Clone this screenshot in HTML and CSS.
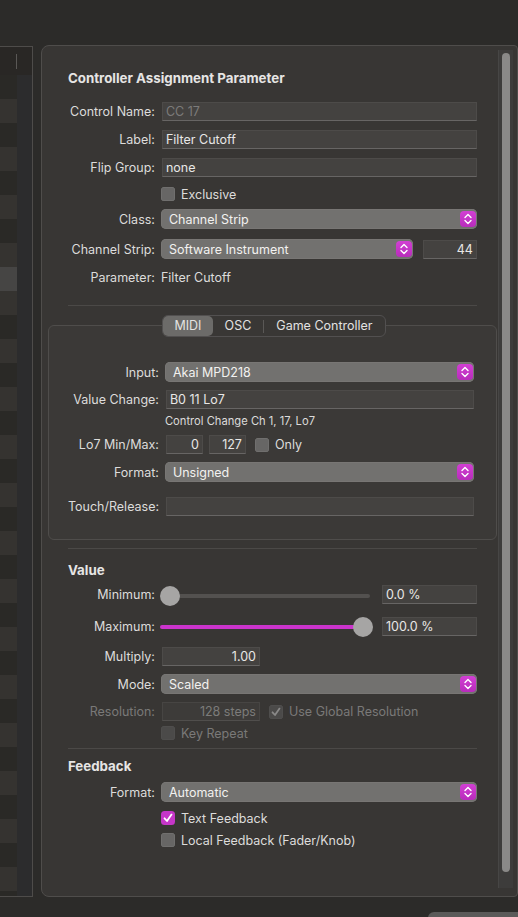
FILE: index.html
```html
<!DOCTYPE html>
<html>
<head>
<meta charset="utf-8">
<link rel="stylesheet" href="styles.css">
</head>
<body>
<div class="top"></div>
<div class="main">
  <div class="list">
    <div class="list-head"><div class="head-col"></div><div class="head-div"></div></div>
    <div class="list-body">
      <div class="rows" id="rows"></div>
      <div class="list-track"></div>
    </div>
  </div>
  <div class="panel">
    <div class="content">
      <div class="title">Controller Assignment Parameter</div>

      <div class="row r-f r-cn">
        <div class="lbl">Control Name:</div>
        <div class="field disabled grow">CC 17</div>
      </div>
      <div class="row r-f r-lab">
        <div class="lbl">Label:</div>
        <div class="field grow">Filter Cutoff</div>
      </div>
      <div class="row r-f r-flip">
        <div class="lbl">Flip Group:</div>
        <div class="field grow">none</div>
      </div>
      <div class="row r-chk r-excl">
        <div class="lbl"></div>
        <div class="chk"></div><span class="chk-text">Exclusive</span>
      </div>
      <div class="row r-pop r-class">
        <div class="lbl">Class:</div>
        <div class="popup grow"><span>Channel Strip</span><div class="step"><svg viewBox="0 0 16 16" width="16" height="16"><path d="M5 6.5 L8 3.5 L11 6.5 M5 9.5 L8 12.5 L11 9.5" fill="none" stroke="#fff" stroke-width="1.4" stroke-linecap="round" stroke-linejoin="round"/></svg></div></div>
      </div>
      <div class="row r-pop r-cs">
        <div class="lbl">Channel Strip:</div>
        <div class="popup cs-pop"><span>Software Instrument</span><div class="step"><svg viewBox="0 0 16 16" width="16" height="16"><path d="M5 6.5 L8 3.5 L11 6.5 M5 9.5 L8 12.5 L11 9.5" fill="none" stroke="#fff" stroke-width="1.4" stroke-linecap="round" stroke-linejoin="round"/></svg></div></div>
        <div class="field num cs-num">44</div>
      </div>
      <div class="row r-txt r-param">
        <div class="lbl">Parameter:</div>
        <span class="plain">Filter Cutoff</span>
      </div>
      <div class="sep sep1"></div>

      <div class="tabbox">
        <div class="seg">
          <div class="seg-item sel">MIDI</div>
          <div class="seg-item">OSC</div>
          <div class="seg-div"></div>
          <div class="seg-item">Game Controller</div>
        </div>
        <div class="row r-pop r-in">
          <div class="lbl lbl2">Input:</div>
          <div class="popup grow"><span>Akai MPD218</span><div class="step"><svg viewBox="0 0 16 16" width="16" height="16"><path d="M5 6.5 L8 3.5 L11 6.5 M5 9.5 L8 12.5 L11 9.5" fill="none" stroke="#fff" stroke-width="1.4" stroke-linecap="round" stroke-linejoin="round"/></svg></div></div>
        </div>
        <div class="row r-f r-vc">
          <div class="lbl lbl2">Value Change:</div>
          <div class="field grow">B0 11 Lo7</div>
        </div>
        <div class="small">Control Change Ch 1, 17, Lo7</div>
        <div class="row r-f r-lo">
          <div class="lbl lbl2">Lo7 Min/Max:</div>
          <div class="field num f-small">0</div>
          <div class="field num f-small f-gap">127</div>
          <div class="chk chk-only"></div><span class="chk-text">Only</span>
        </div>
        <div class="row r-pop r-fmt">
          <div class="lbl lbl2">Format:</div>
          <div class="popup grow"><span>Unsigned</span><div class="step"><svg viewBox="0 0 16 16" width="16" height="16"><path d="M5 6.5 L8 3.5 L11 6.5 M5 9.5 L8 12.5 L11 9.5" fill="none" stroke="#fff" stroke-width="1.4" stroke-linecap="round" stroke-linejoin="round"/></svg></div></div>
        </div>
        <div class="row r-f r-tr">
          <div class="lbl lbl2">Touch/Release:</div>
          <div class="field grow"></div>
        </div>
      </div>
      <div class="sep sep2"></div>

      <div class="title sub t-value">Value</div>
      <div class="row r-f r-min">
        <div class="lbl">Minimum:</div>
        <div class="slider">
          <div class="track"></div>
          <div class="knob knob-min"></div>
        </div>
        <div class="field pct">0.0 %</div>
      </div>
      <div class="row r-f r-max">
        <div class="lbl">Maximum:</div>
        <div class="slider">
          <div class="track"></div>
          <div class="fill"></div>
          <div class="knob knob-max"></div>
        </div>
        <div class="field pct">100.0 %</div>
      </div>
      <div class="row r-f r-mul">
        <div class="lbl">Multiply:</div>
        <div class="field num f-mid">1.00</div>
      </div>
      <div class="row r-pop r-mode">
        <div class="lbl">Mode:</div>
        <div class="popup grow"><span>Scaled</span><div class="step"><svg viewBox="0 0 16 16" width="16" height="16"><path d="M5 6.5 L8 3.5 L11 6.5 M5 9.5 L8 12.5 L11 9.5" fill="none" stroke="#fff" stroke-width="1.4" stroke-linecap="round" stroke-linejoin="round"/></svg></div></div>
      </div>
      <div class="row r-f r-res">
        <div class="lbl dim">Resolution:</div>
        <div class="field num f-mid disabled dfield">128 steps</div>
        <div class="chk dchk res-chk"><svg viewBox="0 0 14 14" width="14" height="14"><path d="M3.5 7.3 L6 10 L10.5 3.6" fill="none" stroke="#8a8988" stroke-width="1.8" stroke-linecap="round" stroke-linejoin="round"/></svg></div><span class="chk-text dim">Use Global Resolution</span>
      </div>
      <div class="row r-chk r-key">
        <div class="lbl"></div>
        <div class="chk dchk"></div><span class="chk-text dim">Key Repeat</span>
      </div>
      <div class="sep sep3"></div>

      <div class="title sub t-fb">Feedback</div>
      <div class="row r-pop r-ffmt">
        <div class="lbl">Format:</div>
        <div class="popup grow"><span>Automatic</span><div class="step"><svg viewBox="0 0 16 16" width="16" height="16"><path d="M5 6.5 L8 3.5 L11 6.5 M5 9.5 L8 12.5 L11 9.5" fill="none" stroke="#fff" stroke-width="1.4" stroke-linecap="round" stroke-linejoin="round"/></svg></div></div>
      </div>
      <div class="row r-chk r-tf">
        <div class="lbl"></div>
        <div class="chk on"><svg viewBox="0 0 14 14" width="14" height="14"><path d="M3.5 7.3 L6 10 L10.5 3.6" fill="none" stroke="#fff" stroke-width="1.8" stroke-linecap="round" stroke-linejoin="round"/></svg></div><span class="chk-text">Text Feedback</span>
      </div>
      <div class="row r-chk r-lf">
        <div class="lbl"></div>
        <div class="chk"></div><span class="chk-text">Local Feedback (Fader/Knob)</span>
      </div>
    </div>
    <div class="scroll"><div class="thumb"></div></div>
  </div>
</div>
<div class="bottom"><div class="btn-edge"></div></div>
<script>
  var r = document.getElementById('rows');
  for (var i = 0; i < 35; i++) {
    var d = document.createElement('div');
    d.className = 'lrow' + (i % 2 ? ' odd' : '') + (i === 8 ? ' selrow' : '');
    r.appendChild(d);
  }
</script>
</body>
</html>
```
FILE: styles.css
```css
html, body {
  margin: 0;
  padding: 0;
}
body {
  width: 518px;
  height: 917px;
  overflow: hidden;
  background: #2c2b29;
  font-family: Inter, "Noto Sans", "Liberation Sans", sans-serif;
  font-size: 12.5px;
  color: #dddcdb;
}
.top {
  height: 45px;
}
.main {
  display: flex;
  height: 852px;
}
.list {
  width: 32px;
  margin-top: 1px;
  height: 849px;
  border-top: 1px solid #4e4c4a;
  border-right: 1px solid #4e4c4a;
  border-bottom: 1px solid #4e4c4a;
  display: flex;
  flex-direction: column;
  overflow: hidden;
}
.list-head {
  height: 28px;
  background: #292725;
  display: flex;
  align-items: center;
  flex: none;
}
.head-col {
  width: 16px;
}
.head-div {
  width: 1px;
  height: 15px;
  background: #5a5856;
}
.list-body {
  flex: 1;
  display: flex;
  overflow: hidden;
}
.rows {
  width: 17px;
}
.lrow {
  height: 24px;
  background: #2a2926;
}
.lrow.odd {
  background: #353330;
}
.lrow.selrow {
  background: #464544;
}
.list-track {
  flex: 1;
  background: #2c2c2d;
}
.panel {
  margin-left: 8px;
  width: 476px;
  height: 850px;
  background: #383634;
  border: 1px solid #4f4d4b;
  border-radius: 8px 4px 4px 8px;
  display: flex;
}
.content {
  width: 409px;
  padding-left: 26px;
  flex: none;
}
.scroll {
  margin-left: 21px;
  margin-top: 4px;
  width: 14px;
  height: 838px;
  background: #3d3c3b;
  border-left: 1px solid #474645;
  display: flex;
  justify-content: center;
}
.thumb {
  margin-top: 3px;
  width: 8px;
  height: 819px;
  background: #8a8988;
  border-radius: 4px;
}
.bottom {
  height: 20px;
  display: flex;
  justify-content: flex-end;
}
.btn-edge {
  margin-top: 15px;
  width: 90px;
  height: 12px;
  background: #5b5a59;
  border-radius: 6px 0 0 0;
}

.title {
  font-weight: 700;
  font-size: 13.3px;
  line-height: 16px;
  height: 16px;
  margin-top: 24px;
  color: #e6e5e4;
  white-space: nowrap;
}
.row {
  display: flex;
  align-items: center;
}
.lbl {
  width: 87px;
  text-align: right;
  margin-right: 6px;
  flex: none;
  white-space: nowrap;
}
.lbl2 {
  width: 91px;
}
.grow {
  flex: 1;
}
.field {
  height: 17px;
  line-height: 17px;
  background: #444240;
  border: 1px solid #4d4b49;
  border-bottom-color: #676564;
  padding: 0 3px;
  margin-left: 1px;
  white-space: nowrap;
  color: #e8e7e6;
}
.field.disabled {
  color: #7c7b7a;
}
.num {
  text-align: right;
}
.popup {
  height: 20px;
  background: #72716f;
  border-radius: 5px;
  display: flex;
  align-items: center;
  padding-left: 8px;
  padding-right: 1px;
  box-sizing: border-box;
  color: #f2f1f0;
  box-shadow: inset 0 0 0 0.5px #7e7d7b;
}
.popup span {
  flex: 1;
}
.step {
  width: 16px;
  height: 16px;
  border-radius: 4px;
  background: linear-gradient(#d23fd4, #b82cbb);
  display: flex;
}
.chk {
  width: 14px;
  height: 14px;
  border-radius: 3.5px;
  background: #676665;
  box-shadow: inset 0 0 0 0.5px #7a7978;
  flex: none;
  display: flex;
}
.chk.on {
  background: #c536c8;
  box-shadow: none;
}
.chk.dchk {
  background: #4b4a49;
  box-shadow: inset 0 0 0 0.5px #545352;
}
.chk-text {
  margin-left: 6px;
  white-space: nowrap;
}
.dim {
  color: #7a7978;
}

.r-f { height: 19px; }
.r-chk { height: 16px; }
.r-pop { height: 20px; }
.r-cn { margin-top: 16px; }
.r-lab { margin-top: 9px; }
.r-flip { margin-top: 9px; }
.r-excl { margin-top: 9px; }
.r-class { margin-top: 7px; }
.r-cs { margin-top: 10px; }
.cs-pop { width: 252px; }
.cs-num { width: 46px; margin-left: 10px; }
.r-param { margin-top: 10px; height: 16px; }
.sep {
  height: 1px;
  background: #4b4947;
}
.sep1 { margin-top: 20px; }

.tabbox {
  margin-top: 19px;
  margin-left: -20px;
  margin-right: -20px;
  border: 1px solid #4f4d4b;
  border-radius: 6px;
  background: #3b3937;
  padding: 0 22px 22px 19px;
  height: 191px;
  box-sizing: content-box;
}
.seg {
  margin: -11px 0 0 94px;
  width: 222px;
  height: 20px;
  border: 1px solid #525050;
  border-radius: 6px;
  background: #393735;
  display: flex;
  align-items: center;
}
.seg-item {
  height: 20px;
  line-height: 20px;
  text-align: center;
  color: #e3e2e1;
}
.seg-item:nth-child(1) { width: 50px; }
.seg-item:nth-child(2) { width: 50px; }
.seg-item:nth-child(4) { flex: 1; }
.seg-item.sel {
  background: #6c6b69;
  border-radius: 5px;
}
.seg-div {
  width: 1px;
  height: 13px;
  background: #5a5856;
}
.r-in { margin-top: 25px; }
.r-vc { margin-top: 8px; }
.small {
  margin-top: 5px;
  margin-left: 97px;
  font-size: 11.2px;
  height: 14px;
  line-height: 14px;
  color: #dcdbda;
  white-space: nowrap;
}
.r-lo { margin-top: 7px; }
.f-small { width: 29px; }
.f-gap { margin-left: 6px; }
.chk-only { margin-left: 9px; }
.r-fmt { margin-top: 8px; }
.r-tr { margin-top: 15px; }
.sep2 { margin-top: 8px; }

.sub { margin-top: 13px; }
.r-min { margin-top: 7px; }
.slider {
  position: relative;
  width: 212px;
  height: 19px;
  margin-left: -1px;
  flex: none;
}
.track {
  position: absolute;
  left: 2px;
  right: 2px;
  top: 9px;
  height: 4px;
  border-radius: 2px;
  background: #53514f;
}
.fill {
  position: absolute;
  left: 0;
  width: 203px;
  top: 9px;
  height: 4px;
  border-radius: 2px;
  background: #cb34cc;
}
.knob {
  position: absolute;
  top: 1px;
  width: 20px;
  height: 20px;
  border-radius: 50%;
  background: #a6a5a4;
}
.knob-min { left: 0; }
.knob-max { left: 193px; }
.pct { width: 87px; margin-left: 10px; }
.r-max { margin-top: 13px; }
.r-max .knob { top: 0; }
.r-max .track, .r-max .fill { top: 8px; }
.r-mul { margin-top: 11px; }
.f-mid { width: 90px; }
.r-mode { margin-top: 8px; }
.r-res { margin-top: 8px; }
.dfield {
  background: #3d3b39;
  border-color: #474543;
  border-bottom-color: #504e4c;
}
.res-chk { margin-left: 9px; }
.r-key { margin-top: 4px; }
.sep3 { margin-top: 7px; }
.t-fb { margin-top: 9px; }
.r-ffmt { margin-top: 8px; }
.r-tf { margin-top: 8px; }
.r-lf { margin-top: 6px; }
```
